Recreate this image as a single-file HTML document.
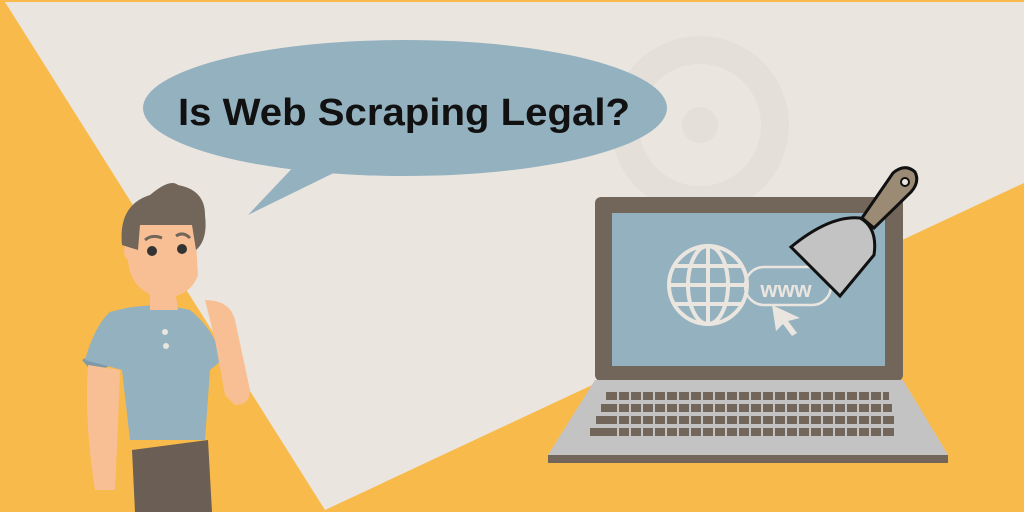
<!DOCTYPE html>
<html><head><meta charset="utf-8"><style>
html,body{margin:0;padding:0;width:1024px;height:512px;overflow:hidden;background:#F8BA4A}
svg{display:block}
</style></head><body>
<svg width="1024" height="512" viewBox="0 0 1024 512" xmlns="http://www.w3.org/2000/svg">
<rect width="1024" height="512" fill="#F8BA4A"/>
<polygon points="5,2 1024,2 1024,183 325,510" fill="#EAE6DF"/>
<!-- faint gear -->
<circle cx="700" cy="125" r="75" fill="none" stroke="#e0dcd5" stroke-width="28" opacity="0.6"/>
<circle cx="700" cy="125" r="18" fill="#e0dcd5" opacity="0.6"/>
<!-- speech bubble -->
<ellipse cx="405" cy="108" rx="262" ry="68" fill="#93B1BF"/>
<polygon points="300,160 350,165 248,215" fill="#93B1BF"/>
<text x="404" y="125" text-anchor="middle" font-family="Liberation Sans, sans-serif" font-weight="bold" font-size="38" fill="#111" textLength="452" lengthAdjust="spacingAndGlyphs">Is Web Scraping Legal?</text>
<!-- laptop -->
<rect x="595" y="197" width="308" height="184" rx="6" fill="#726559"/>
<rect x="612" y="213" width="273" height="153" fill="#94B1BF"/>
<polygon points="595,380 903,380 948,455 548,455" fill="#C3C3C3"/>
<rect x="548" y="455" width="400" height="8" fill="#726559"/>
<g fill="#726559">
<rect x="606" y="392" width="283" height="8"/>
<rect x="601" y="404" width="291" height="8"/>
<rect x="596" y="416" width="298" height="8"/>
<rect x="590" y="428" width="304" height="8"/>
</g>
<g stroke="#C3C3C3" stroke-width="2">
<path d="M618 390v48M630 390v48M642 390v48M654 390v48M666 390v48M678 390v48M690 390v48M702 390v48M714 390v48M726 390v48M738 390v48M750 390v48M762 390v48M774 390v48M786 390v48M798 390v48M810 390v48M822 390v48M834 390v48M846 390v48M858 390v48M870 390v48M882 390v48"/>
</g>
<!-- globe -->
<g fill="none" stroke="#EAE6DF" stroke-width="4">
<circle cx="708" cy="285" r="39"/>
<ellipse cx="708" cy="285" rx="20" ry="39"/>
<path d="M708 246v78M669 285h78M675 266h66M675 304h66"/>
<rect x="745" y="267" width="86" height="38" rx="19" stroke-width="2.5"/>
</g>
<text x="786" y="297" text-anchor="middle" font-family="Liberation Sans, sans-serif" font-weight="bold" font-size="22" fill="#EAE6DF">www</text>
<polygon points="772,305 800,318 788,321 797,333 792,336 783,324 776,331" fill="#EAE6DF"/>
<!-- scraper -->
<path d="M893,173 Q905,163 915,172 Q920,182 911,192 L874,228 L862,218 Z" fill="#9b8a74" stroke="#111" stroke-width="3"/>
<circle cx="905" cy="182" r="4" fill="#EAE6DF" stroke="#111" stroke-width="2"/>
<path d="M791,247 Q830,215 860,218 Q878,228 874,255 L840,296 Z" fill="#C3C3C3" stroke="#111" stroke-width="3"/>
<!-- man -->
<path d="M132,450 L135,512 L212,512 L208,440 Z" fill="#6b5e54"/>
<path d="M100,350 L82,360 L95,375 L110,365 Z" fill="#7f9aa6"/>
<path d="M88,365 Q84,420 95,490 L115,490 Q118,430 120,370 Z" fill="#F8BF94"/>
<path d="M110,312 Q150,300 190,310 Q215,330 222,360 L210,370 L205,440 L130,440 L122,370 L85,360 Q95,325 110,312 Z" fill="#94B1BF"/>
<path d="M205,300 Q230,300 235,320 L250,390 Q250,405 235,405 L225,395 L215,340 Z" fill="#F8BF94"/>
<path d="M150,290 L175,290 L178,310 L150,310 Z" fill="#F8BF94"/>
<path d="M135,215 Q170,205 195,225 L198,275 Q190,298 160,298 Q130,290 128,260 Q122,255 125,245 Z" fill="#F8BF94"/>
<path d="M122,245 Q118,205 150,195 Q170,178 178,185 Q205,190 205,215 Q208,240 196,250 L192,225 Q165,225 140,225 L138,250 Z" fill="#726559"/>
<circle cx="152" cy="251" r="5" fill="#333"/>
<circle cx="182" cy="249" r="5" fill="#333"/>
<path d="M145,240 Q152,234 162,238" stroke="#726559" stroke-width="3" fill="none"/>
<path d="M176,236 Q183,231 190,238" stroke="#726559" stroke-width="3" fill="none"/>
<circle cx="165" cy="332" r="3" fill="#EAE6DF"/>
<circle cx="166" cy="346" r="3" fill="#EAE6DF"/>
</svg>
</body></html>
